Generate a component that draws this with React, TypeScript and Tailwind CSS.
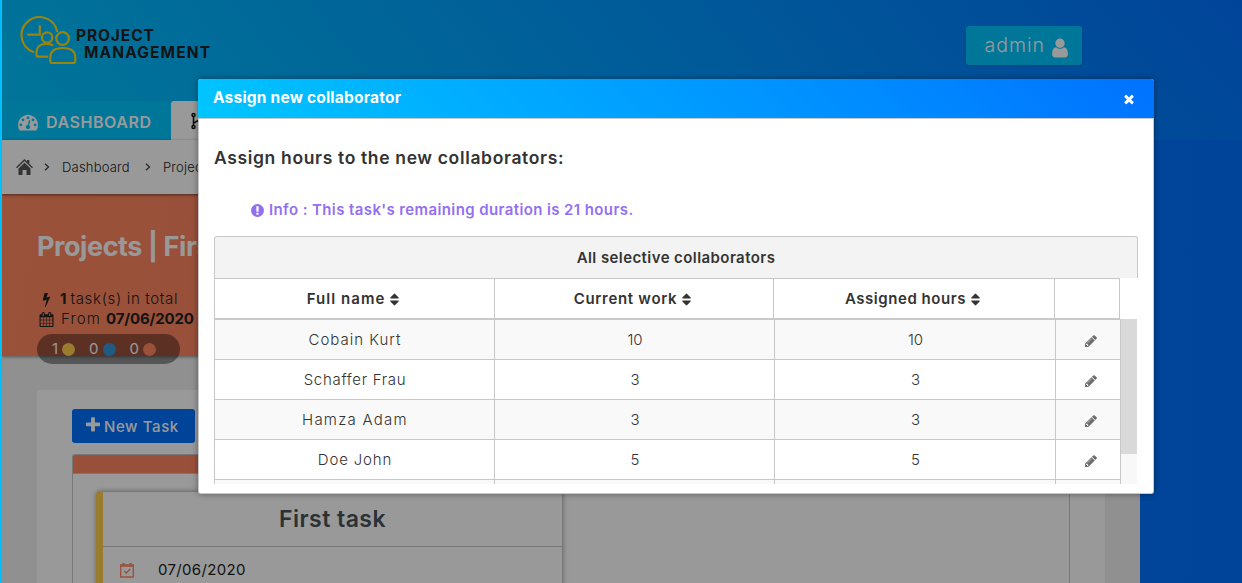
import type { ReactNode } from "react";

const paths = {
  plus: "M1600 736v192q0 40-28 68t-68 28h-416v416q0 40-28 68t-68 28h-192q-40 0-68-28t-28-68v-416h-416q-40 0-68-28t-28-68v-192q0-40 28-68t68-28h416v-416q0-40 28-68t68-28h192q40 0 68 28t28 68v416h416q40 0 68 28t28 68z",
  sort: "M1408 1088q0 26-19 45l-448 448q-19 19-45 19t-45-19l-448-448q-19-19-19-45t19-45 45-19h896q26 0 45 19t19 45zm0-384q0 26-19 45t-45 19h-896q-26 0-45-19t-19-45 19-45l448-448q19-19 45-19t45 19l448 448q19 19 19 45z",
  user: "M1536 1399q0 109-62.5 187t-150.5 78h-854q-88 0-150.5-78t-62.5-187q0-85 8.5-160.5t31.5-152 58.5-131 94-89 134.5-34.5q131 128 313 128t313-128q76 0 134.5 34.5t94 89 58.5 131 31.5 152 8.5 160.5zm-256-887q0 159-112.5 271.5t-271.5 112.5-271.5-112.5-112.5-271.5 112.5-271.5 271.5-112.5 271.5 112.5 112.5 271.5z",
  times: "M1490 1322q0 40-28 68l-136 136q-28 28-68 28t-68-28l-294-294-294 294q-28 28-68 28t-68-28l-136-136q-28-28-28-68t28-68l294-294-294-294q-28-28-28-68t28-68l136-136q28-28 68-28t68 28l294 294 294-294q28-28 68-28t68 28l136 136q28 28 28 68t-28 68l-294 294 294 294q28 28 28 68z",
  pencil: "M491 1536l91-91-235-235-91 91v107h128v128h107zm523-928q0-22-22-22-10 0-17 7l-542 542q-7 7-7 17 0 22 22 22 10 0 17-7l542-542q7-7 7-17zm-54-192l416 416-832 832h-416v-416zm683 96q0 53-37 90l-166 166-416-416 166-165q36-38 90-38 53 0 91 38l235 234q37 39 37 91z",
  gauge: "M384 1152q0-53-37.5-90.5t-90.5-37.5-90.5 37.5-37.5 90.5 37.5 90.5 90.5 37.5 90.5-37.5 37.5-90.5zm192-448q0-53-37.5-90.5t-90.5-37.5-90.5 37.5-37.5 90.5 37.5 90.5 90.5 37.5 90.5-37.5 37.5-90.5zm428 481l101-382q6-26-7.5-48.5t-38.5-29.5-48 6.5-30 39.5l-101 382q-60 5-107 43.5t-63 98.5q-20 77 20 146t117 89 146-20 89-117q16-60-6-117t-72-91zm660-33q0-53-37.5-90.5t-90.5-37.5-90.5 37.5-37.5 90.5 37.5 90.5 90.5 37.5 90.5-37.5 37.5-90.5zm-640-640q0-53-37.5-90.5t-90.5-37.5-90.5 37.5-37.5 90.5 37.5 90.5 90.5 37.5 90.5-37.5 37.5-90.5zm448 192q0-53-37.5-90.5t-90.5-37.5-90.5 37.5-37.5 90.5 37.5 90.5 90.5 37.5 90.5-37.5 37.5-90.5zm320 448q0 261-141 483-19 29-54 29h-1402q-35 0-54-29-141-221-141-483 0-182 71-348t191-286 286-191 348-71 348 71 286 191 191 286 71 348z",
  info: "M896 128q209 0 385.5 103t279.5 279.5 103 385.5-103 385.5-279.5 279.5-385.5 103-385.5-103-279.5-279.5-103-385.5 103-385.5 279.5-279.5 385.5-103zm128 1247v-190q0-14-9-23.5t-22-9.5h-192q-13 0-23 10t-10 23v190q0 13 10 23t23 10h192q13 0 22-9.5t9-23.5zm-2-344l18-621q0-12-10-18-10-8-24-8h-220q-14 0-24 8-10 6-10 18l17 621q0 10 10 17.5t24 7.5h185q14 0 23.5-7.5t10.5-17.5z",
  calendar: "M192 1664h288v-288h-288v288zm352 0h320v-288h-320v288zm-352-352h288v-320h-288v320zm352 0h320v-320h-320v320zm-352-384h288v-288h-288v288zm736 736h320v-288h-320v288zm-384-736h320v-288h-320v288zm768 736h288v-288h-288v288zm-384-352h320v-320h-320v320zm-352-864v-288q0-13-9.5-22.5t-22.5-9.5h-64q-13 0-22.5 9.5t-9.5 22.5v288q0 13 9.5 22.5t22.5 9.5h64q13 0 22.5-9.5t9.5-22.5zm736 864h288v-320h-288v320zm-384-384h320v-288h-320v288zm384 0h288v-288h-288v288zm32-480v-288q0-13-9.5-22.5t-22.5-9.5h-64q-13 0-22.5 9.5t-9.5 22.5v288q0 13 9.5 22.5t22.5 9.5h64q13 0 22.5-9.5t9.5-22.5zm384-64v1280q0 52-38 90t-90 38h-1408q-52 0-90-38t-38-90v-1280q0-52 38-90t90-38h128v-96q0-66 47-113t113-47h64q66 0 113 47t47 113v96h384v-96q0-66 47-113t113-47h64q66 0 113 47t47 113v96h128q52 0 90 38t38 90z",
  bolt: "M1333 566q18 20 7 44l-540 1157q-13 25-42 25-4 0-14-2-17-5-25.5-19t-4.5-30l197-808-406 101q-4 1-12 1-18 0-31-11-18-15-13-39l201-825q4-14 16-23t28-9h328q19 0 32 12.5t13 29.5q0 8-5 18l-171 463 396-98q8-2 12-2 19 0 34 15z",
};

function Icon({ name, className }: { name: keyof typeof paths; className: string }) {
  return (
    <svg viewBox="0 0 1792 1792" fill="currentColor" className={`shrink-0 overflow-visible ${className}`}>
      <path d={paths[name]} />
    </svg>
  );
}

function Logo() {
  return (
    <svg viewBox="0.2 0.5 60 52" fill="none" stroke="#ffdd1c" strokeWidth="2.2" strokeLinecap="round" strokeLinejoin="round" className="h-[52px] w-[60px] shrink-0">
      <path d="M14.5 38.5A18 18 0 1 1 38.3 17.5M21 12.5v8.7H9.3" />
      <circle cx="28.3" cy="24" r="5.2" />
      <path d="M28.5 43.2H19.5q-1.8 0-1.8-1.8v-2.5q0-8.4 9.6-8.4 4.5 0 6.2 1" />
      <circle cx="43.8" cy="25" r="6.3" />
      <path d="M33.5 49.5q-2 0-2-2V44q0-9.5 12.5-9.5T56.5 44v3.5q0 2-2 2z" />
    </svg>
  );
}

function Count({ value, dot }: { value: number; dot: string }) {
  return (
    <span className="flex items-center gap-1">
      <span className="w-[10px] text-right">{value}</span>
      <span className={`size-[13px] rounded-full ${dot}`} />
    </span>
  );
}

function Chevron({ className }: { className: string }) {
  return (
    <svg viewBox="0 0 6 8" fill="none" stroke="#444" strokeWidth="1.3" className={`h-2 w-1.5 shrink-0 ${className}`}>
      <path d="M1 .8L4.5 4 1 7.2" />
    </svg>
  );
}

function Header({ children, className }: { children?: ReactNode; className: string }) {
  return (
    <div className={`flex items-center justify-center gap-[2px] border-r border-[#c8c8c8] pt-px ${className}`}>
      {children}
      {children && <Icon name="sort" className="size-[15px]" />}
    </div>
  );
}

const rows = [
  { name: "Cobain Kurt", tracking: "tracking-[1px]", current: 10, assigned: 10 },
  { name: "Schaffer Frau", tracking: "tracking-[0.7px]", current: 3, assigned: 3 },
  { name: "Hamza Adam", tracking: "tracking-[1.25px]", current: 3, assigned: 3 },
  { name: "Doe John", tracking: "tracking-[0.85px]", current: 5, assigned: 5 },
];

function Page() {
  return (
    <div className="flex h-full flex-col">
      <header className="flex h-[140px] shrink-0 flex-col justify-between bg-[linear-gradient(50deg,#00c6ff,#0072ff)] pl-0.5">
        <div className="flex items-start justify-between pl-[17px] pr-40">
          <div className="flex pt-3.5">
            <Logo />
            <div className="-ml-[3px] pt-[13px] text-[15.5px] font-bold leading-[17px] text-[#222]">
              <div className="tracking-[0.9px]">PROJECT</div>
              <div className="pl-2 tracking-[1.13px]">MANAGEMENT</div>
            </div>
          </div>
          <div className="mt-[26px] flex h-[39px] w-[116px] items-center gap-[4px] rounded-[3px] bg-[#00c6ff] pl-[18.5px] text-[19.5px] font-light tracking-[1px] text-white shadow-sm">
            <span>admin</span>
            <Icon name="user" className="mt-1 size-[22px]" />
          </div>
        </div>
        <nav className="flex h-[39px]">
          <div className="flex w-[169px] items-center gap-2 bg-[#00c6ff] pl-4 pt-0.5 text-base font-semibold tracking-[0.55px] text-white">
            <Icon name="gauge" className="size-5" />
            DASHBOARD
          </div>
          <div className="flex w-[200px] items-center rounded-t-[3px] bg-white pl-5">
            <svg viewBox="0 0 16 18" fill="none" stroke="#111" strokeWidth="1.5" className="h-[18px] w-4">
              <circle cx="2.5" cy="3" r="1.5" />
              <circle cx="2.5" cy="15" r="1.5" />
              <path d="M2.5 4.5v9M2.5 11l6-3V5" />
            </svg>
          </div>
        </nav>
      </header>

      <div className="ml-0.5 flex w-[1138px] grow flex-col bg-[#f1f1f1]">
        <div className="z-10 flex h-[54px] shrink-0 items-center bg-white pl-3.5 text-[13px] font-light text-[#222] shadow-[0_1px_3px_rgba(0,0,0,0.5)]">
          <svg viewBox="0 0 17 16" className="h-4 w-[17px]" fill="#555">
            <path d="M8.500 0l2.500 2.400V1h2.300v3.700L17 8.300l-1 1-7.500-7.200L1 9.300l-1-1z" />
            <path d="M8.500 3.700l6 5.800V16h-4v-5h-4v5h-4V9.500z" />
          </svg>
          <Chevron className="ml-[11px] mr-3" />
          <span className="w-[83px] pt-px tracking-[0.2px]">Dashboard</span>
          <Chevron className="mr-3" />
          <span className="pt-px tracking-[0.2px]">Projects</span>
        </div>

        <section className="flex h-[162px] shrink-0 flex-col bg-[linear-gradient(100deg,#ff8a60,#ff8364_30%)] pl-[35px] shadow-[0_1px_3px_rgba(0,0,0,0.4)]">
          <h1 className="mt-[34px] text-[27px] font-bold leading-[38px] tracking-[-0.43px] text-white">Projects | First project</h1>
          <div className="mt-[23px] flex h-5 items-center text-[15px] font-light text-[#222]">
            <Icon name="bolt" className="ml-[2px] mr-[6px] size-[15px]" />
            <span className="mr-[4px] font-bold">1</span>
            <span className="tracking-[0.67px]">task(s) in total</span>
          </div>
          <div className="flex h-5 items-center text-[15px] font-light text-[#222]">
            <Icon name="calendar" className="ml-[2px] mr-[7px] size-[15px]" />
            <span className="mr-[5px] tracking-[1.15px]">From</span>
            <span className="font-bold tracking-[-0.15px]">07/06/2020</span>
          </div>
          <div className="mt-[5px] flex h-[30px] w-[143px] shrink-0 items-center gap-[13.5px] rounded-full bg-black/40 pl-[11px] text-[15px] text-white">
            <Count value={1} dot="bg-[#ffcf4d]" />
            <Count value={0} dot="bg-[#3498db]" />
            <Count value={0} dot="bg-[#ff8860]" />
          </div>
        </section>

        <main className="ml-[35px] mt-[34px] flex w-[1068px] grow flex-col bg-white pl-[35px] pt-[19px]">
          <button className="flex h-[34px] w-[123px] shrink-0 items-center gap-[2px] rounded-[3px] bg-[#0072ff] pl-3 pt-0.5 text-[15px] font-medium tracking-[0.6px] text-white">
            <Icon name="plus" className="-mt-1 size-[18px]" />
            New Task
          </button>
          <div className="mt-[11px] flex w-[998px] grow flex-col rounded-t-[3px] border border-b-0 border-[#c8c8c8]">
            <div className="h-[19px] shrink-0 rounded-t-[2px] border-b border-[#c8c8c8] bg-[#ff8562]" />
            <article className="ml-[23px] mt-[17px] flex w-[467px] grow flex-col rounded-t border border-b-0 border-l-[7px] border-[#c8c8c8] border-l-[#ffcf4d] shadow-[0_0_5px_rgba(0,0,0,0.35)]">
              <h2 className="flex h-[55px] shrink-0 items-center justify-center border-b border-[#c8c8c8] text-[23px] font-semibold tracking-[0.45px] text-[#485459]">First task</h2>
              <div className="flex h-[46px] items-center pl-4 text-[15px] tracking-[0.33px] text-[#222]">
                <svg viewBox="0 0 16 16" fill="none" stroke="#ff8562" strokeWidth="1.3" className="mr-[23px] size-4 shrink-0">
                  <path d="M1.7 3h12.6v12H1.7z" />
                  <path d="M1.5 4.2h13M5.2 9l2 2 4-4" />
                  <path strokeWidth="2" d="M4.5 1v3M11.5 1v3" />
                </svg>
                07/06/2020
              </div>
            </article>
          </div>
        </main>
      </div>
    </div>
  );
}

function Dialog() {
  return (
    <div className="flex h-[415px] w-[956px] flex-col rounded-[3px] border border-t-0 border-[#c8c8c8] bg-white text-[#333] shadow-[0_0_6px_rgba(0,0,0,0.4)]">
      <div className="-mx-px flex h-10 shrink-0 items-center justify-between rounded-t-[3px] border-b border-[#c8c8c8] bg-[linear-gradient(45deg,#00c6ff,#0072ff)] pl-[15px] pr-[18px] text-[15.5px] font-bold tracking-[0.21px] text-white">
        <span className="-mt-px">Assign new collaborator</span>
        <Icon name="times" className="mt-px size-3.5" />
      </div>
      <div className="flex flex-col px-[15px]">
        <h3 className="mt-[27px] text-[17.5px] font-semibold leading-6 tracking-[0.65px]">Assign hours to the new collaborators:</h3>
        <p className="ml-[36px] mt-[30px] flex h-5 items-center gap-[4px] text-[15px] font-semibold tracking-[0.39px] text-[#9370f0]">
          <Icon name="info" className="size-[15px]" />
          Info : This task's remaining duration is 21 hours.
        </p>
        <div className="mt-4 flex h-[42px] items-center justify-center rounded-t-[3px] border border-b-0 border-[#c8c8c8] bg-[#f3f3f3] pt-px text-[15px] font-semibold tracking-[0.42px]">
          All selective collaborators
        </div>
        <div className="flex h-[41px] w-[906px] border-y border-l border-[#c8c8c8] text-[15px] font-semibold">
          <Header className="w-[280px] tracking-[1.05px]">Full name</Header>
          <Header className="w-[279px] tracking-[0.7px]">Current work</Header>
          <Header className="w-[281px] tracking-[0.54px]">Assigned hours</Header>
          <Header className="w-[65px]" />
        </div>
        <div className="flex h-[165px] overflow-hidden text-[15px] font-light">
          <div className="w-[907px] border-l border-[#c8c8c8]">
            {rows.map((r) => (
              <div key={r.name} className="flex h-10 border-t border-[#c8c8c8] odd:bg-[#f9f9f9]">
                <div className={`flex w-[280px] items-center justify-center border-r border-[#c8c8c8] pl-px pt-0.5 ${r.tracking}`}>{r.name}</div>
                <div className="flex w-[280px] items-center justify-center border-r border-[#c8c8c8] pl-px pt-0.5">{r.current}</div>
                <div className="flex w-[281px] items-center justify-center border-r border-[#c8c8c8] pl-px pt-0.5">{r.assigned}</div>
                <div className="flex w-[65px] items-center justify-center border-r border-[#c8c8c8] pl-[5px] pt-[2px] text-[#6c6c6c]">
                  <Icon name="pencil" className="size-3.5" />
                </div>
              </div>
            ))}
            <div className="flex h-10 border-t border-[#c8c8c8] bg-[#f9f9f9]">
              <div className="w-[280px] border-r border-[#c8c8c8]" />
              <div className="w-[280px] border-r border-[#c8c8c8]" />
              <div className="w-[281px] border-r border-[#c8c8c8]" />
              <div className="w-[65px] border-r border-[#c8c8c8]" />
            </div>
          </div>
          <div className="w-4 bg-[#f8f8f8]">
            <div className="h-[135px] bg-[#d9d9d9]" />
          </div>
        </div>
      </div>
    </div>
  );
}

export default function App() {
  return (
    <div className="relative h-[583px] w-[1242px] overflow-hidden bg-[linear-gradient(90deg,#0082ff,#0072ff)] font-['Inter','Liberation_Sans',sans-serif]">
      <Page />
      <div className="absolute inset-0 z-20 flex items-start border-l-2 border-[#00bfff] bg-black/40 pl-[196px] pt-[79px]">
        <Dialog />
      </div>
    </div>
  );
}
